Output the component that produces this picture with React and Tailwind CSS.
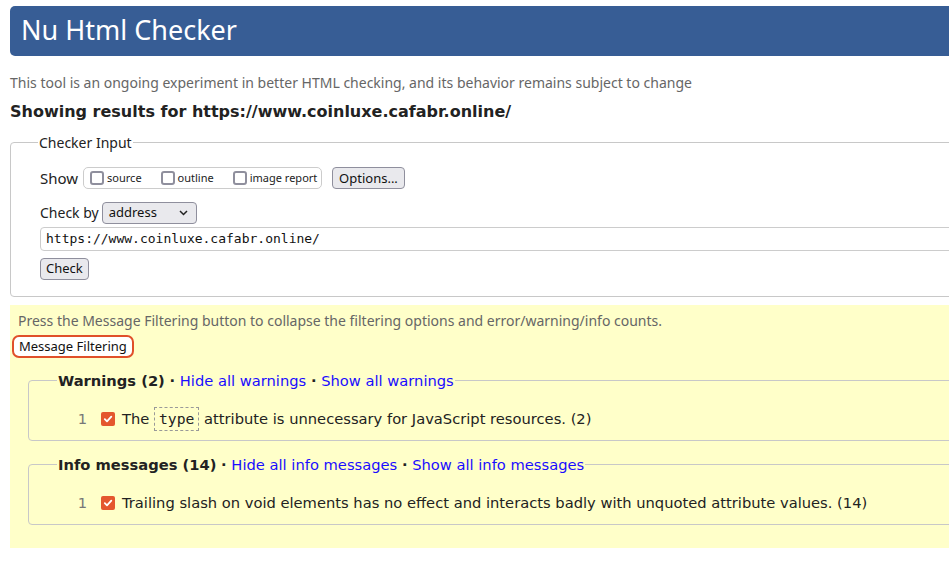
import React from 'react';

const UI = { fontFamily: '"Noto Sans", "Open Sans", sans-serif' };
const DEJA = { fontFamily: '"DejaVu Sans", sans-serif' };
const MONO = { fontFamily: '"DejaVu Sans Mono", monospace' };

function Tick() {
  return (
    <span className="inline-flex w-[14px] h-[14px] rounded-[2px] bg-[#e4572e] items-center justify-center shrink-0">
      <svg width="10" height="10" viewBox="0 0 10 10" fill="none" stroke="#fff" strokeWidth="1.8" strokeLinecap="round" strokeLinejoin="round">
        <polyline points="1.8 5.2 4 7.4 8.3 2.6" />
      </svg>
    </span>
  );
}

function Box({ label }) {
  return (
    <span className="flex items-center gap-[3px]">
      <span className="w-[14px] h-[14px] border-2 border-[#8f8f9d] rounded-[3px] bg-white" />
      <span className="text-[11px] text-[#222]">{label}</span>
    </span>
  );
}

function Group({ title, count, hide, show, children }) {
  return (
    <fieldset className="border border-[#c8c8c8] rounded-[4px] ml-[18px] pl-[28px] pb-[9px] pt-[15px]">
      <legend className="px-[1px] text-[14.7px] text-[#222]" style={DEJA}>
        <b>{title} ({count})</b> <b>·</b> <span className="text-[#1a0dff]">{hide}</span> <b>·</b>{' '}
        <span className="text-[#1a0dff]">{show}</span>
      </legend>
      {children}
    </fieldset>
  );
}

function Row({ children }) {
  return (
    <div className="flex items-center text-[14.7px] text-[#222] h-[24px]" style={DEJA}>
      <span className="w-[44px] text-right pr-[14px] text-[#777]">1</span>
      <Tick />
      <span className="ml-[7px]">{children}</span>
    </div>
  );
}

export default function App() {
  return (
    <div className="w-[949px] h-[573px] overflow-hidden bg-white">
      <div className="w-[1010px] pl-[10px] pt-[6px]" style={UI}>
        <header className="h-[50px] bg-[#375d95] rounded-l-[5px] flex items-center pl-[11px] pb-[3px]">
          <h1 className="text-white text-[27px] leading-none">Nu Html Checker</h1>
        </header>

        <p className="mt-[17px] text-[14px] text-[#666] leading-[20px]">
          This tool is an ongoing experiment in better HTML checking, and its behavior remains subject to change
        </p>
        <h2 className="mt-[9px] text-[16px] font-bold text-[#222] leading-[20px]" style={DEJA}>
          Showing results for https://www.coinluxe.cafabr.online/
        </h2>

        <fieldset className="mt-[10px] border border-[#c8c8c8] rounded-[4px] pl-[29px] pr-0 pb-[16px] pt-[14px]">
          <legend className="ml-[-2px] px-[1px] text-[14px] text-[#222]">Checker Input</legend>
          <div className="flex items-center text-[14px] text-[#222]">
            <span className="mr-[5px] text-[15px]">Show</span>
            <div className="flex items-center h-[22px] w-[239px] border border-[#ccc] rounded-[5px] pl-[6px] gap-[19px]">
              <Box label="source" />
              <Box label="outline" />
              <Box label="image report" />
            </div>
            <button className="ml-[10px] h-[22px] px-[6px] bg-[#e9e9ed] border border-[#8f8f9d] rounded-[4px] text-[13px] text-[#111]">
              Options...
            </button>
          </div>
          <div className="flex items-center mt-[12px] text-[14px] text-[#222]">
            <span className="mr-[3px]">Check by</span>
            <div className="flex items-center justify-between w-[95px] h-[22px] bg-[#e9e9ed] border border-[#8f8f9d] rounded-[4px] pl-[6px] pr-[8px] text-[13px] text-[#111]">
              <span>address</span>
              <svg width="9" height="6" viewBox="0 0 9 6" fill="none" stroke="#222" strokeWidth="1.5">
                <polyline points="1 1 4.5 4.5 8 1" />
              </svg>
            </div>
          </div>
          <div className="mt-[3px] h-[24px] border border-[#ccc] rounded-[4px] flex items-center pl-[5px] text-[13px] text-[#111]" style={MONO}>
            https://www.coinluxe.cafabr.online/
          </div>
          <button className="mt-[7px] h-[22px] px-[5px] bg-[#e9e9ed] border border-[#8f8f9d] rounded-[4px] text-[13px] text-[#111]">
            Check
          </button>
        </fieldset>

        <section className="mt-[8px] bg-[#ffffc9] pt-[7px] pb-[23px]">
          <p className="ml-[8px] text-[14px] text-[#666] leading-[18px]">
            Press the Message Filtering button to collapse the filtering options and error/warning/info counts.
          </p>
          <button className="mt-[5px] ml-[2px] h-[23px] px-[5px] bg-white border-2 border-[#e0502a] rounded-[7px] text-[13px] text-[#111]">
            Message Filtering
          </button>
          <div className="mt-[12px]">
            <Group title="Warnings" count="2" hide="Hide all warnings" show="Show all warnings">
              <Row>
                The{' '}
                <code className="inline-block px-[4px] border border-dashed border-[#999] leading-[22px]" style={MONO}>type</code>{' '}
                attribute is unnecessary for JavaScript resources. (2)
              </Row>
            </Group>
          </div>
          <div className="mt-[13px]">
            <Group title="Info messages" count="14" hide="Hide all info messages" show="Show all info messages">
              <Row>Trailing slash on void elements has no effect and interacts badly with unquoted attribute values. (14)</Row>
            </Group>
          </div>
        </section>
      </div>
    </div>
  );
}
